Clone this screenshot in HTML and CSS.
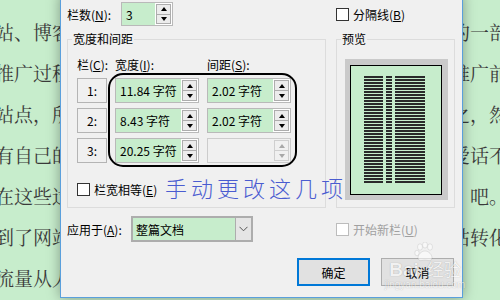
FILE: index.html
```html
<!DOCTYPE html>
<html lang="zh-CN">
<head>
<meta charset="UTF-8">
<title>分栏</title>
<link rel="stylesheet" href="styles.css">
</head>
<body>
<div class="page">
    <p><span>站、博客</span><span class="gap"></span><span>的一部</span></p>
    <p><span>推广过程</span><span class="gap"></span><span>推广前</span></p>
    <p><span>站点，所</span><span class="gap"></span><span>之，然</span></p>
    <p><span>有自己的</span><span class="gap"></span><span>爱话不</span></p>
    <p><span>在这些过</span><span class="gap"></span><span>　吧。</span></p>
    <p><span>到了网站</span><span class="gap"></span><span>站转化</span></p>
    <p><span>流量从人</span></p>
</div>

<div class="dialog">
    <div class="count">
        <span class="label">栏数(<u>N</u>):</span>
        <div class="spin spin-count"><span class="field">3</span><span class="arrows"><i class="up"></i><i class="down"></i></span></div>
    </div>
    <div class="check divider"><span class="box"></span>分隔线(<u>B</u>)</div>

    <fieldset class="group group-size">
        <legend>宽度和间距</legend>
        <div class="size-grid">
            <span class="head">栏(<u>C</u>):</span>
            <span class="head">宽度(<u>I</u>):</span>
            <span class="head">间距(<u>S</u>):</span>

            <span class="num">1:</span>
            <div class="spin"><span class="field">11.84 字符</span><span class="arrows"><i class="up"></i><i class="down"></i></span></div>
            <div class="spin"><span class="field">2.02 字符</span><span class="arrows"><i class="up"></i><i class="down"></i></span></div>

            <span class="num">2:</span>
            <div class="spin"><span class="field">8.43 字符</span><span class="arrows"><i class="up"></i><i class="down"></i></span></div>
            <div class="spin"><span class="field">2.02 字符</span><span class="arrows"><i class="up"></i><i class="down"></i></span></div>

            <span class="num">3:</span>
            <div class="spin"><span class="field">20.25 字符</span><span class="arrows"><i class="up"></i><i class="down"></i></span></div>
            <div class="spin disabled"><span class="field"></span><span class="arrows"><i class="up"></i><i class="down"></i></span></div>
        </div>
        <div class="check equal"><span class="box"></span>栏宽相等(<u>E</u>)</div>
    </fieldset>

    <fieldset class="group group-preview">
        <legend>预览</legend>
        <div class="preview">
            <div class="sheet">
                <span class="stripe s1"></span>
                <span class="stripe s2"></span>
                <span class="stripe s3"></span>
            </div>
        </div>
    </fieldset>

    <div class="apply">
        <span class="label">应用于(<u>A</u>):</span>
        <div class="combo">
            <span class="value">整篇文档</span>
            <span class="drop"><svg width="9" height="6" viewBox="0 0 9 6"><polyline points="0.5,0.8 4.5,4.8 8.5,0.8" fill="none" stroke="#555" stroke-width="1"/></svg></span>
        </div>
    </div>
    <div class="check newcol"><span class="box"></span>开始新栏(<u>U</u>)</div>

    <div class="buttons">
        <div class="btn btn-primary">确定</div>
        <div class="btn">取消</div>
    </div>

    <!-- 标注 -->
    <div class="ring"></div>
    <div class="note">手动更改这几项</div>
</div>

<div class="watermark">
    <svg class="paw" width="22" height="20" viewBox="0 0 22 20">
        <ellipse cx="6" cy="5" rx="2.5" ry="3.2"/>
        <ellipse cx="11" cy="3" rx="2.5" ry="3"/>
        <ellipse cx="16" cy="5" rx="2.5" ry="3.2"/>
        <ellipse cx="3" cy="11" rx="2.2" ry="2.8"/>
        <path d="M11 9c-4 0-7 4-7 7 0 2 2 3 4 2.5 2-0.5 4-0.5 6 0 2 0.5 4-0.5 4-2.5 0-3-3-7-7-7z"/>
    </svg>
    <div class="wm-brand"><span class="wm-bai">Bai</span><span class="wm-jy">经验</span></div>
    <div class="wm-url">jingyan.baidu.com</div>
</div>
</body>
</html>
```

FILE: styles.css
```css
* {
    margin: 0;
    padding: 0;
    box-sizing: border-box;
}
body {
    width: 500px;
    height: 300px;
    overflow: hidden;
    position: relative;
    background-color: #c7edcc;
    font-family: "Noto Sans CJK SC", sans-serif;
}
.page {
    margin-left: -5px;
    padding-top: 11px;
    font-family: "Noto Serif CJK SC", "Noto Sans CJK SC", serif;
    font-size: 19px;
    line-height: 41px;
    color: #3a3a3a;
    white-space: nowrap;
}
.page .gap {
    display: inline-block;
    width: 20em;
}
.dialog {
    position: absolute;
    left: 60px;
    top: -6px;
    width: 403px;
    height: 304px;
    background: #f0f0f0;
    border: 1px solid #5a9fdc;
    box-shadow: 0 0 12px rgba(0, 0, 0, 0.35);
    padding: 7px 7px 0 6px;
    display: grid;
    grid-template-columns: 259px 119px;
    column-gap: 10px;
    align-content: start;
    font-size: 12px;
    color: #000;
}
u {
    text-decoration: underline;
}
.count {
    display: flex;
    align-items: center;
    height: 24px;
}
.count .label {
    width: 54px;
}
.spin {
    display: flex;
    height: 25px;
    border: 1px solid #b9b9b9;
    background: #fff;
}
.spin-count {
    width: 52px;
    height: 24px;
}
.field {
    flex: 1;
    display: flex;
    align-items: center;
    padding-left: 4px;
    background: #c7edcc;
    white-space: nowrap;
}
.arrows {
    width: 15px;
    margin: 1px;
    display: flex;
    flex-direction: column;
    border: 1px solid #adadad;
    background: #ececec;
}
.arrows i {
    flex: 1;
    display: flex;
    align-items: center;
    justify-content: center;
}
.arrows i + i {
    border-top: 1px solid #adadad;
}
.arrows i::before {
    content: "";
    border-left: 3.5px solid transparent;
    border-right: 3.5px solid transparent;
}
.up::before {
    border-bottom: 4px solid #000;
}
.down::before {
    border-top: 4px solid #000;
}
.spin.disabled {
    border-color: #cccccc;
    background: #f0f0f0;
}
.spin.disabled .field {
    background: #f0f0f0;
}
.spin.disabled .arrows {
    border-color: #cfcfcf;
    background: #f0f0f0;
}
.spin.disabled .arrows i + i {
    border-top-color: #cfcfcf;
}
.spin.disabled .up::before {
    border-bottom-color: #a8a8a8;
}
.spin.disabled .down::before {
    border-top-color: #a8a8a8;
}
.check {
    display: flex;
    align-items: center;
    height: 14px;
    white-space: nowrap;
}
.check .box {
    width: 13px;
    height: 13px;
    border: 1px solid #333;
    background: #fff;
    margin-right: 4px;
}
.divider {
    align-self: center;
}
.group {
    border: 1px solid #dcdcdc;
    margin-top: 6px;
    min-width: 0;
}
.group legend {
    line-height: 14px;
    padding: 0 1px;
}
.group-size {
    padding: 11px 0 11px 9px;
}
.group-size legend {
    margin-left: -5px;
}
.size-grid {
    display: grid;
    grid-template-columns: 30px 84px 84px;
    grid-template-rows: 16px repeat(3, 25px);
    column-gap: 8px;
    row-gap: 5px;
}
.head {
    line-height: 16px;
    white-space: nowrap;
}
.num {
    border: 1px solid #b4b4b4;
    display: flex;
    align-items: center;
    justify-content: center;
}
.equal {
    margin-top: 19px;
}
.group-preview {
    padding: 13px 0 0 8px;
}
.group-preview legend {
    margin-left: -4px;
}
.preview {
    width: 103px;
    padding: 6px 6px 5px 5px;
    background: #cacaca;
}
.sheet {
    height: 130px;
    border: 1px solid #000;
    background: #c7edcc;
    display: flex;
    gap: 3px;
    padding: 10px 0 0 13px;
}
.stripe {
    height: 107px;
    background: repeating-linear-gradient(#2a2a2a 0 2px, transparent 2px 3px);
}
.s1 {
    width: 19px;
}
.s2 {
    width: 6px;
}
.s3 {
    width: 30px;
}
.apply {
    display: flex;
    align-items: center;
    margin-top: 8px;
}
.apply .label {
    width: 64px;
    white-space: nowrap;
}
.combo {
    width: 122px;
    height: 26px;
    border: 2px solid #adadad;
    display: flex;
}
.combo .value {
    flex: 1;
    display: flex;
    align-items: center;
    padding-left: 3px;
    background: #c7edcc;
}
.combo .drop {
    width: 16px;
    background: #e5e5e5;
    border-left: 1px solid #adadad;
    display: flex;
    align-items: center;
    justify-content: center;
}
.newcol {
    margin-top: 8px;
    align-self: center;
    color: #a0a0a0;
}
.newcol .box {
    border-color: #bcbcbc;
}
.buttons {
    grid-column: 1 / -1;
    justify-self: end;
    display: flex;
    gap: 11px;
    margin-top: 16px;
    margin-right: 1px;
}
.btn {
    width: 73px;
    height: 28px;
    background: #e1e1e1;
    border: 1px solid #adadad;
    display: flex;
    align-items: center;
    justify-content: center;
}
.btn-primary {
    border: 2px solid #0078d7;
}
.ring {
    position: absolute;
    left: 47px;
    top: 78px;
    width: 189px;
    height: 94px;
    border: 2.5px solid #000;
    border-radius: 15px;
}
.note {
    position: absolute;
    left: 104px;
    top: 180px;
    font-size: 22px;
    font-weight: 300;
    line-height: 24px;
    letter-spacing: 4px;
    color: #4a5cd0;
    white-space: nowrap;
}
.watermark {
    position: absolute;
    left: 380px;
    top: 242px;
    width: 90px;
    display: flex;
    flex-direction: column;
    align-items: center;
    opacity: 0.55;
    color: #fff;
    font-family: "Liberation Sans", "Noto Sans CJK SC", sans-serif;
    text-shadow: 0 0 1px rgba(0, 0, 0, 0.5);
}
.paw {
    fill: #fff;
    stroke: rgba(0, 0, 0, 0.25);
    stroke-width: 0.6;
    margin-bottom: -2px;
}
.wm-brand {
    display: flex;
    align-items: baseline;
    gap: 8px;
    line-height: 18px;
}
.wm-bai {
    font-size: 19px;
    font-weight: bold;
}
.wm-jy {
    font-size: 17px;
    font-family: "Noto Sans CJK SC", sans-serif;
}
.wm-url {
    font-size: 10px;
    line-height: 12px;
}
```
